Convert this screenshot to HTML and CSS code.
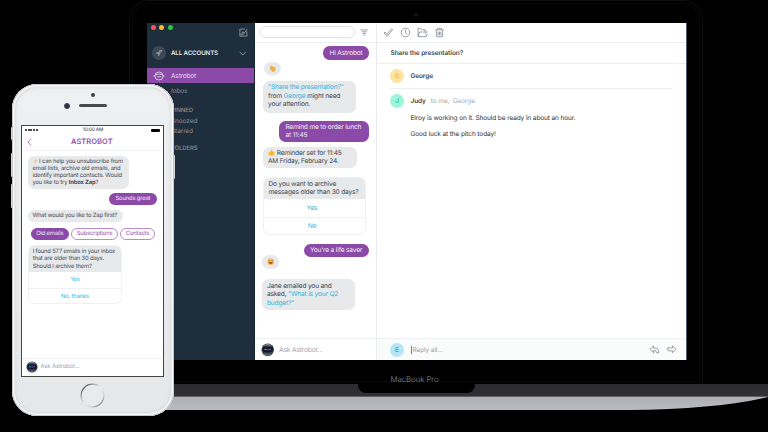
FILE: index.html
```html
<!DOCTYPE html>
<html lang="en">
<head>
<meta charset="utf-8">
<title>Astrobot</title>
<link rel="stylesheet" href="styles.css">
</head>
<body>
<main class="stage">
  <section class="laptop">
    <div class="lid">
      <i class="webcam"></i>
      <div class="window">
        <aside class="sidebar">
          <div class="side-top">
            <div class="lights"><i class="red"></i><i class="yellow"></i><i class="green"></i></div>
            <svg class="compose" viewBox="0 0 10 10"><path d="M6.500 1.200H1v7.800h7.800V3.500M2.500 7.500l1.700-3.300 1.700 1.400L9 1.200M2.500 7.500l2-.2 1.700-1.900"/></svg>
          </div>
          <div class="accounts">
            <span class="rocket"><svg viewBox="0 0 10 10"><path d="M9 1Q5.500 1 4 4L2 4.300 1 6l2-.2L4.300 7 4 9l1.800-1L6 6Q9 4.500 9 1Z"/><circle cx="6.500" cy="3.500" r=".8"/></svg></span>
            <b>ALL ACCOUNTS</b>
            <svg class="chev" viewBox="0 0 8 5"><path d="M.7.7 4 4.200 7.300.7"/></svg>
          </div>
          <div class="side-active"><svg viewBox="0 0 10 10"><circle cx="5" cy="5" r="4"/><path d="M1 3.700Q5 2.500 9 3.700M.2 4v2M9.800 4v2M3.200 5.500Q5 6.500 6.800 5.500"/></svg><span>Astrobot</span></div>
          <div class="side-item inbox">Inbox</div>
          <div class="side-head pinned">PINNED</div>
          <div class="side-item">Snoozed</div>
          <div class="side-item">Starred</div>
          <div class="side-head folders">FOLDERS</div>
        </aside>
        <section class="chat">
          <div class="chat-bar">
            <span class="search"></span>
            <svg class="filter" viewBox="0 0 10 8"><path d="M.5 1h9M2 3.200h6M3 5.200h4M4 7.100h2"/></svg>
          </div>
          <div class="msg me hi">Hi Astrobot</div>
          <div class="msg emoji wave"><svg viewBox="0 0 10 10"><path d="M1 3.200 2.200 2.200 1.800 1 3 .7 7 3.500 7.500 1.800 8.700 2.500 9 7 6.800 9.300 4.500 9 1.500 6Z" fill="#f5b84c"/><path d="m2.500 2 3.500 3.200M2 4.200l3 2.600M4 2l3 2.900" stroke="#c8832a" stroke-width=".5"/></svg></div>
          <div class="msg bot share"><a>"Share the presentation?"</a><br>from <a>George</a> might need<br>your attention.</div>
          <div class="msg me remind">Remind me to order lunch<br>at 11:45</div>
          <div class="msg bot reminder"><svg class="thumb" viewBox="0 0 10 10"><path d="M.8 4.500h2L5.200.5Q7 .8 6 4h3q.8.900 0 1.600.5 1-.3 1.500.3 1-.6 1.300 0 1-1 1H3.500L.8 8.800Z" fill="#fbb829"/></svg> Reminder set for 11:45<br>AM Friday, February 24.</div>
          <div class="card archive">
            <div class="card-q">Do you want to archive<br>messages older than 30 days?</div>
            <div class="card-a">Yes</div>
            <div class="card-a">No</div>
          </div>
          <div class="msg me saver">You're a life saver</div>
          <div class="msg emoji smile"><svg viewBox="0 0 10 10"><circle cx="5" cy="5" r="4.300" fill="#f6b83d"/><path d="M2 5.200h6Q7.500 8 5 8T2 5.200Z" fill="#ad5431"/><path d="m2.200 4 .8-.8.800.8M6.200 4l.8-.8.800.8" fill="none" stroke="#76502a" stroke-width=".7"/></svg></div>
          <div class="msg bot jane">Jane emailed you and<br>asked, <a>"What is your Q2</a><br><a>budget?"</a></div>
          <div class="ask"><svg class="bot-face" viewBox="0 0 14 14"><circle cx="7" cy="7" r="6.500" fill="#344150"/><path d="M2.500 3Q7-1 11.500 3Q7 1.600 2.500 3Z" fill="#8a939c"/><rect x="1.500" y="4" width="11" height="5.500" rx="2.500" fill="#151a2e"/><path d="M3.500 6.800h3" stroke="#32a9b4"/><path d="M7 6.800h3.500" stroke="#7752b5"/><path d="M3 11.500Q7 13 11 11.500" stroke="#8a939c" fill="none" stroke-width=".6"/></svg><span>Ask Astrobot...</span></div>
        </section>
        <section class="mail">
          <div class="mail-bar">
            <svg viewBox="0 0 12 12"><path d="m1 6.500 1.200-1L4.300 8 9.300 2l1.200.9-6 7.300ZM5 7l1.500 1.500"/></svg>
            <svg viewBox="0 0 12 12"><circle cx="6" cy="6" r="4.700"/><path d="M6 3v3.200l2 1.500"/></svg>
            <svg viewBox="0 0 12 12"><path d="M6 10.500H1.200v-9H4l1.200 1.600h3.300v1.400M1.200 10.500l1.500-5h3M6 10.500h4.300l.6-3M6.500 5.500h4M8.800 3.700l1.900 1.800-1.900 1.800"/></svg>
            <svg viewBox="0 0 12 12"><path d="M1.500 3h9M4 3V1.300h4V3M2.400 3l.5 7.700h6.200L9.600 3M4.500 5v4M6 5v4M7.500 5v4"/></svg>
          </div>
          <h1>Share the presentation?</h1>
          <div class="george"><span class="av g">G</span><b>George</b></div>
          <div class="judy"><span class="av j">J</span><b>Judy</b><span class="to">to me,&nbsp; George</span></div>
          <div class="body"><p>Elroy is working on it. Should be ready in about an hour.</p><p>Good luck at the pitch today!</p></div>
          <div class="reply"><span class="av e">E</span><i class="caret"></i><span class="ph">Reply all...</span>
            <svg viewBox="0 0 12 10"><path d="M5 1 1 4.700 5 8.500V6.300h2.500L8 8.500h2.500Q11.500 3.200 5 3.200Z"/></svg>
            <svg viewBox="0 0 12 10"><path d="M7 3.200V1l4 3.800-4 3.700V6.300H2M1 3.200h6M.7 4.800h2"/></svg>
          </div>
        </section>
      </div>
      <div class="model">MacBook Pro</div>
    </div>
    <div class="hinge"><div class="notch"></div></div>
    <svg class="base" viewBox="0 0 700 14" preserveAspectRatio="none"><defs><linearGradient id="metal" x2="0" y2="1"><stop stop-color="#aeafb4"/><stop offset="1" stop-color="#bbbcc1"/></linearGradient></defs><path d="M0 0H700Q650 12 560 13H0Z" fill="url(#metal)"/></svg>
  </section>

  <section class="phone">
    <i class="btn b1"></i><i class="btn b2"></i><i class="btn b3"></i><i class="btn b4"></i>
    <div class="shell">
      <div class="sensors"><i class="dot"></i><div><i class="lens"></i><i class="slot"></i></div></div>
      <div class="display">
        <div class="status"><span class="sig"><i></i><i></i><i></i><i></i><i></i></span><span class="time">10:00 AM</span><span class="bat"></span></div>
        <div class="nav"><svg viewBox="0 0 6 10"><path d="M5 .8 1 5l4 4.200"/></svg><b>ASTROBOT</b></div>
        <div class="msg bot help"><svg class="bolt" viewBox="0 0 6 8"><path d="M4.500.3.5 4.600h2L1.500 7.700 5.500 3.400h-2Z" fill="#f8bc55"/></svg> I can help you unsubscribe from<br>email lists, archive old emails, and<br>identify important contacts. Would<br>you like to try <b>Inbox Zap</b>?</div>
        <div class="msg me great">Sounds great</div>
        <div class="msg bot what">What would you like to Zap first?</div>
        <div class="chips"><span class="chip on">Old emails</span><span class="chip subs">Subscriptions</span><span class="chip cont">Contacts</span></div>
        <div class="card found">
          <div class="card-q">I found 577 emails in your inbox<br>that are older than 30 days.<br>Should I archive them?</div>
          <div class="card-a">Yes</div>
          <div class="card-a">No, thanks</div>
        </div>
        <div class="ask"><svg class="bot-face" viewBox="0 0 14 14"><circle cx="7" cy="7" r="6.500" fill="#344150"/><path d="M2.500 3Q7-1 11.500 3Q7 1.600 2.500 3Z" fill="#8a939c"/><rect x="1.500" y="4" width="11" height="5.500" rx="2.500" fill="#151a2e"/><path d="M3.500 6.800h3" stroke="#32a9b4"/><path d="M7 6.800h3.500" stroke="#7752b5"/><path d="M3 11.500Q7 13 11 11.500" stroke="#8a939c" fill="none" stroke-width=".6"/></svg><span>Ask Astrobot...</span></div>
      </div>
      <svg class="home" viewBox="0 0 26 26"><defs><linearGradient id="ring" x2="1" y2="1"><stop stop-color="#222"/><stop offset=".3" stop-color="#aaa"/><stop offset=".5" stop-color="#eee"/><stop offset=".75" stop-color="#ccc"/><stop offset="1" stop-color="#333"/></linearGradient></defs><circle cx="13" cy="13" r="11.800" fill="#e9eaeb" stroke="url(#ring)" stroke-width="1.200"/></svg>
    </div>
  </section>
</main>
</body>
</html>
```
FILE: styles.css
```css
* { box-sizing: border-box; }
body { margin: 0; background: #000; font-family: Inter, "Liberation Sans", sans-serif; text-rendering: geometricPrecision; }
.stage { position: relative; width: 768px; height: 432px; overflow: hidden; background: #000; }
i { display: block; font-style: normal; }
svg { display: block; flex: none; overflow: visible; }
a { color: #35b4df; }

/* laptop */
.laptop { position: absolute; left: 68px; top: 0; width: 700px; }
.lid { width: 574px; height: 384px; margin-left: 61px; padding: 21.500px 16px 0 17px; border: 1px solid #0e0e0e; border-bottom: 0; border-radius: 20px 20px 0 0; position: relative; box-shadow: inset 0 0 0 2px #000, inset 0 0 0 3px #090909; }
.webcam { position: absolute; left: 284px; top: 12px; width: 4px; height: 4px; border-radius: 50%; background: #111318; }
.window { display: flex; width: 539.500px; height: 337.500px; background: #fff; border-right: 1px solid #53606b; }
.model { margin: 14px 4px 0 0; height: 10px; line-height: 10px; font-size: 7.900px; font-weight: 300; letter-spacing: -.1px; color: #8b8b8b; text-align: center; }
.hinge { height: 13px; background: linear-gradient(#2b2b2f, #303035); display: flex; justify-content: center; border-bottom: 1px solid #606064; }
.notch { width: 117px; height: 8.500px; margin-left: -4px; background: #000; border-radius: 0 0 8px 8px; }
.base { width: 700px; height: 14px; }

.sidebar { width: 108px; background: #1f2e3d; color: #87919a; font-size: 6.500px; letter-spacing: -.1px; border-right: 1px solid #182430; }
.side-top { display: flex; justify-content: space-between; height: 18px; padding: 2.800px 6.500px 0 3.500px; }
.lights { display: flex; gap: 3.500px; }
.lights i { width: 5px; height: 5px; border-radius: 50%; }
.red { background: #fc5753; } .yellow { background: #fdbc2e; } .green { background: #2bc840; }
.compose { width: 9px; height: 9px; margin-top: 2.700px; fill: none; stroke: #9ba4ab; stroke-width: .9; }
.accounts { display: flex; align-items: center; height: 27px; padding: 0 8px 2px 5px; color: #e1e4e7; font-size: 6.200px; letter-spacing: -.13px; }
.accounts b { margin-left: 5px; font-weight: 600; }
.rocket { width: 14px; height: 14px; border-radius: 50%; background: #3b4956; display: grid; place-items: center; }
.rocket svg { width: 8px; fill: #8d98a0; } .rocket circle { fill: #3b4956; }
.chev { width: 7.500px; height: 5px; margin-left: auto; fill: none; stroke: #9ba4ab; stroke-width: .9; }
.side-active { display: flex; align-items: center; height: 15px; margin-top: .5px; background: #8b49a8; color: #e5d6eb; padding-left: 7px; gap: 7px; font-size: 6.600px; letter-spacing: -.2px; }
.side-active svg { width: 10px; height: 10px; fill: none; stroke: #dfcde7; stroke-width: .9; }
.side-item { height: 10px; line-height: 10px; padding-left: 24px; }
.inbox { margin-top: 2.700px; }
.side-head { height: 10px; line-height: 10px; padding-left: 24px; font-size: 6px; font-weight: 500; }
.pinned { margin-top: 10.500px; }
.folders { margin-top: 8.300px; }

/* conversation */
.chat { width: 122px; display: flex; flex-direction: column; padding-right: 7.500px; border-right: 1px solid #e9ebed; letter-spacing: -.18px; }
.chat-bar { display: flex; align-items: center; height: 20px; margin-right: -7.500px; padding-left: 4px; gap: 5px; border-bottom: 1px solid #eceeef; flex: none; }
.search { width: 96px; height: 11.500px; border: 1px solid #e0e2e5; border-radius: 6px; }
.filter { width: 8.500px; height: 7px; fill: none; stroke: #8e959e; stroke-width: 1; }
.msg { flex: none; border-radius: 6.500px; white-space: nowrap; }
.chat .msg, .chat .card { font-size: 6.600px; line-height: 8.400px; }
.bot { background: #e7e9eb; color: #3c4753; align-self: flex-start; }
.me { background: #8b49a8; color: #f4ebf7; align-self: flex-end; }
.hi { width: 45.500px; height: 13.500px; margin-top: 3.500px; padding: 2.700px 6px 0 6.500px; }
.emoji { width: 17px; height: 13.500px; background: #e7e9eb; display: grid; place-items: center; }
.emoji svg { width: 7.500px; }
.wave { margin: 2px 0 0 9px; }
.share { width: 93px; height: 31.500px; margin: 6px 0 0 8px; padding: 2.200px 5px; }
.remind { width: 89.500px; height: 21.500px; margin-top: 8px; padding: 2.500px 6.500px; }
.reminder { width: 94px; height: 21.500px; margin: 4.500px 0 0 8px; padding: 2.500px 5px; }
.thumb { display: inline-block; width: 7px; height: 7px; vertical-align: -1px; }
.card { flex: none; border: 1px solid #eff0f2; border-radius: 6.500px; overflow: hidden; white-space: nowrap; }
.card-q { background: #e7e9eb; color: #3c4753; }
.card-a { display: grid; place-items: center; color: #35b4df; }
.card-a + .card-a { border-top: 1px solid #eff0f2; }
.archive { width: 103px; height: 58.500px; margin: 8.500px 0 0 8px; }
.archive .card-q { height: 21.500px; padding: 2px 4.500px; }
.archive .card-a { height: 18px; padding-right: 5px; }
.saver { width: 64.500px; height: 13.500px; margin-top: 8.500px; padding: 2.700px 6px 0; }
.smile { margin: -2px 0 0 7px; }
.jane { width: 93px; height: 31.500px; margin: 10px 0 0 7px; padding: 3.500px 5px; }
.ask { display: flex; align-items: center; margin-top: auto; color: #9fa4a9; border-top: 1px solid #eff0f1; flex: none; }
.chat .ask { height: 22px; margin-right: -7.500px; padding-left: 6px; gap: 4.500px; font-size: 6.700px; }
.chat .bot-face { width: 13.500px; }

/* message pane */
.mail { flex: 1; display: flex; flex-direction: column; color: #3a4653; font-size: 6.500px; letter-spacing: -.1px; }
.mail-bar { display: flex; align-items: center; gap: 6px; height: 20px; padding-left: 6px; border-bottom: 1px solid #eceeef; }
.mail-bar svg { width: 11px; fill: none; stroke: #9097a0; stroke-width: 1; }
h1 { margin: 0; height: 21px; line-height: 20.500px; padding-left: 13.500px; font-size: 6.500px; font-weight: 600; border-bottom: 1px solid #eceeef; }
.av { width: 14px; height: 14px; border-radius: 50%; display: grid; place-items: center; font-weight: 600; font-size: 6.500px; margin-right: 6.500px; }
.g { background: #ffe2a0; color: #f9b941; } .j { background: #9cf5d6; color: #35c99d; } .e { background: #b4e6f5; color: #3ba9cd; }
.george { display: flex; align-items: center; height: 25px; margin: 0 14px 0 13px; border-bottom: 1px solid #eceeef; }
.judy { display: flex; align-items: center; height: 25px; padding-left: 13px; }
.mail b { font-weight: 600; }
.to { color: #a3a8ae; margin-left: 5px; }
.body { padding: 0 0 0 33.500px; color: #2c3238; }
.body p { margin: 0 0 8.300px; line-height: 8.400px; white-space: nowrap; }
.reply { margin-top: auto; height: 22px; display: flex; align-items: center; padding: 0 9px 0 13px; background: #fafbfb; border-top: 1px solid #f0f1f2; color: #989ea6; }
.caret { width: 1px; height: 8px; background: #9d63b8; }
.ph { margin-left: 1px; margin-right: auto; }
.reply svg { width: 11px; margin-left: 6px; fill: none; stroke: #8e96a0; stroke-width: 1; }

/* phone */
.phone { position: absolute; left: 11.500px; top: 84px; width: 162px; height: 331.500px; }
.shell { position: relative; height: 100%; border-radius: 25px; background: linear-gradient(#eff0f2, #e6e7e8); box-shadow: inset 0 0 0 1px #c4c5c6, inset 0 0 0 2.500px #f8f8f8, inset 0 0 3px 4px #dcdddd; padding: 9px 0 0 9.500px; }
.btn { position: absolute; background: #d5d6d7; width: 2px; border-radius: 1px; }
.b1 { left: -.5px; top: 43px; height: 13px; } .b2 { left: -.5px; top: 69px; height: 24px; } .b3 { left: -.5px; top: 100px; height: 24px; } .b4 { right: -1px; top: 71px; height: 24px; }
.sensors { height: 31.500px; }
.sensors .dot { width: 4px; height: 4px; border-radius: 50%; background: #414141; margin-left: 70px; }
.sensors div { display: flex; align-items: center; margin: 5.500px 0 0 43px; gap: 9px; }
.lens { width: 6px; height: 6px; border-radius: 50%; background: #282f52; border: 1px solid #444; }
.slot { width: 28px; height: 3px; border-radius: 2px; background: #494949; }
.display { width: 143px; height: 252px; border: 1.500px solid #454545; background: #fff; display: flex; flex-direction: column; padding: 0 6px; color: #3c4753; font-size: 5.800px; line-height: 6.900px; letter-spacing: -.14px; }
.status { display: flex; justify-content: space-between; align-items: center; height: 9px; margin: 0 -3px; padding-top: .5px; font-size: 4.800px; color: #222; }
.sig { display: flex; gap: .6px; width: 13px; } .sig i { width: 2.100px; height: 2.100px; border-radius: 50%; background: #111; }
.time { margin-left: -3px; }
.bat { width: 9px; height: 3.500px; background: #000; border-radius: 1px; }
.nav { display: flex; align-items: center; height: 16px; margin: 0 -6px; padding-left: 5px; border-bottom: 1px solid #f0f1f2; color: #9450ae; }
.nav svg { width: 5px; height: 8px; fill: none; stroke: #9450ae; stroke-width: 1; }
.nav b { font-size: 7.500px; font-weight: 600; letter-spacing: .05px; margin-left: 39px; }
.help { width: 101px; height: 33px; margin-top: 5px; padding: 2.800px 4.500px; }
.bolt { display: inline-block; width: 5px; height: 6px; vertical-align: -1px; }
.great { width: 47.500px; height: 12px; margin-top: 4.200px; margin-right: .5px; padding: 3.200px 6.500px; }
.what { width: 94.500px; height: 12px; margin-top: 5.500px; padding: 3.200px 4.500px; }
.chips { display: flex; gap: 2px; margin: 5.500px 0 0 2.500px; }
.chip { height: 12px; border: 1px solid #b98bca; border-radius: 6px; color: #9450ae; display: grid; place-items: center; padding-top: 1.200px; width: 38.500px; flex: none; white-space: nowrap; }
.on { background: #8b49a8; border-color: #8b49a8; color: #f4ebf7; } .subs { width: 47px; } .cont { width: 35px; }
.found { width: 94px; height: 59.500px; margin-top: 5px; line-height: 7.500px; }
.found .card-q { height: 26px; padding: 2px 3.700px; }
.found .card-a { height: 16.500px; }
.display .ask { height: 18px; margin: auto -6px 0; padding-left: 3.500px; gap: 3px; font-size: 5.900px; }
.display .bot-face { width: 12px; }
.home { width: 25px; height: 25px; margin: 6px 0 0 58.500px; }
```
